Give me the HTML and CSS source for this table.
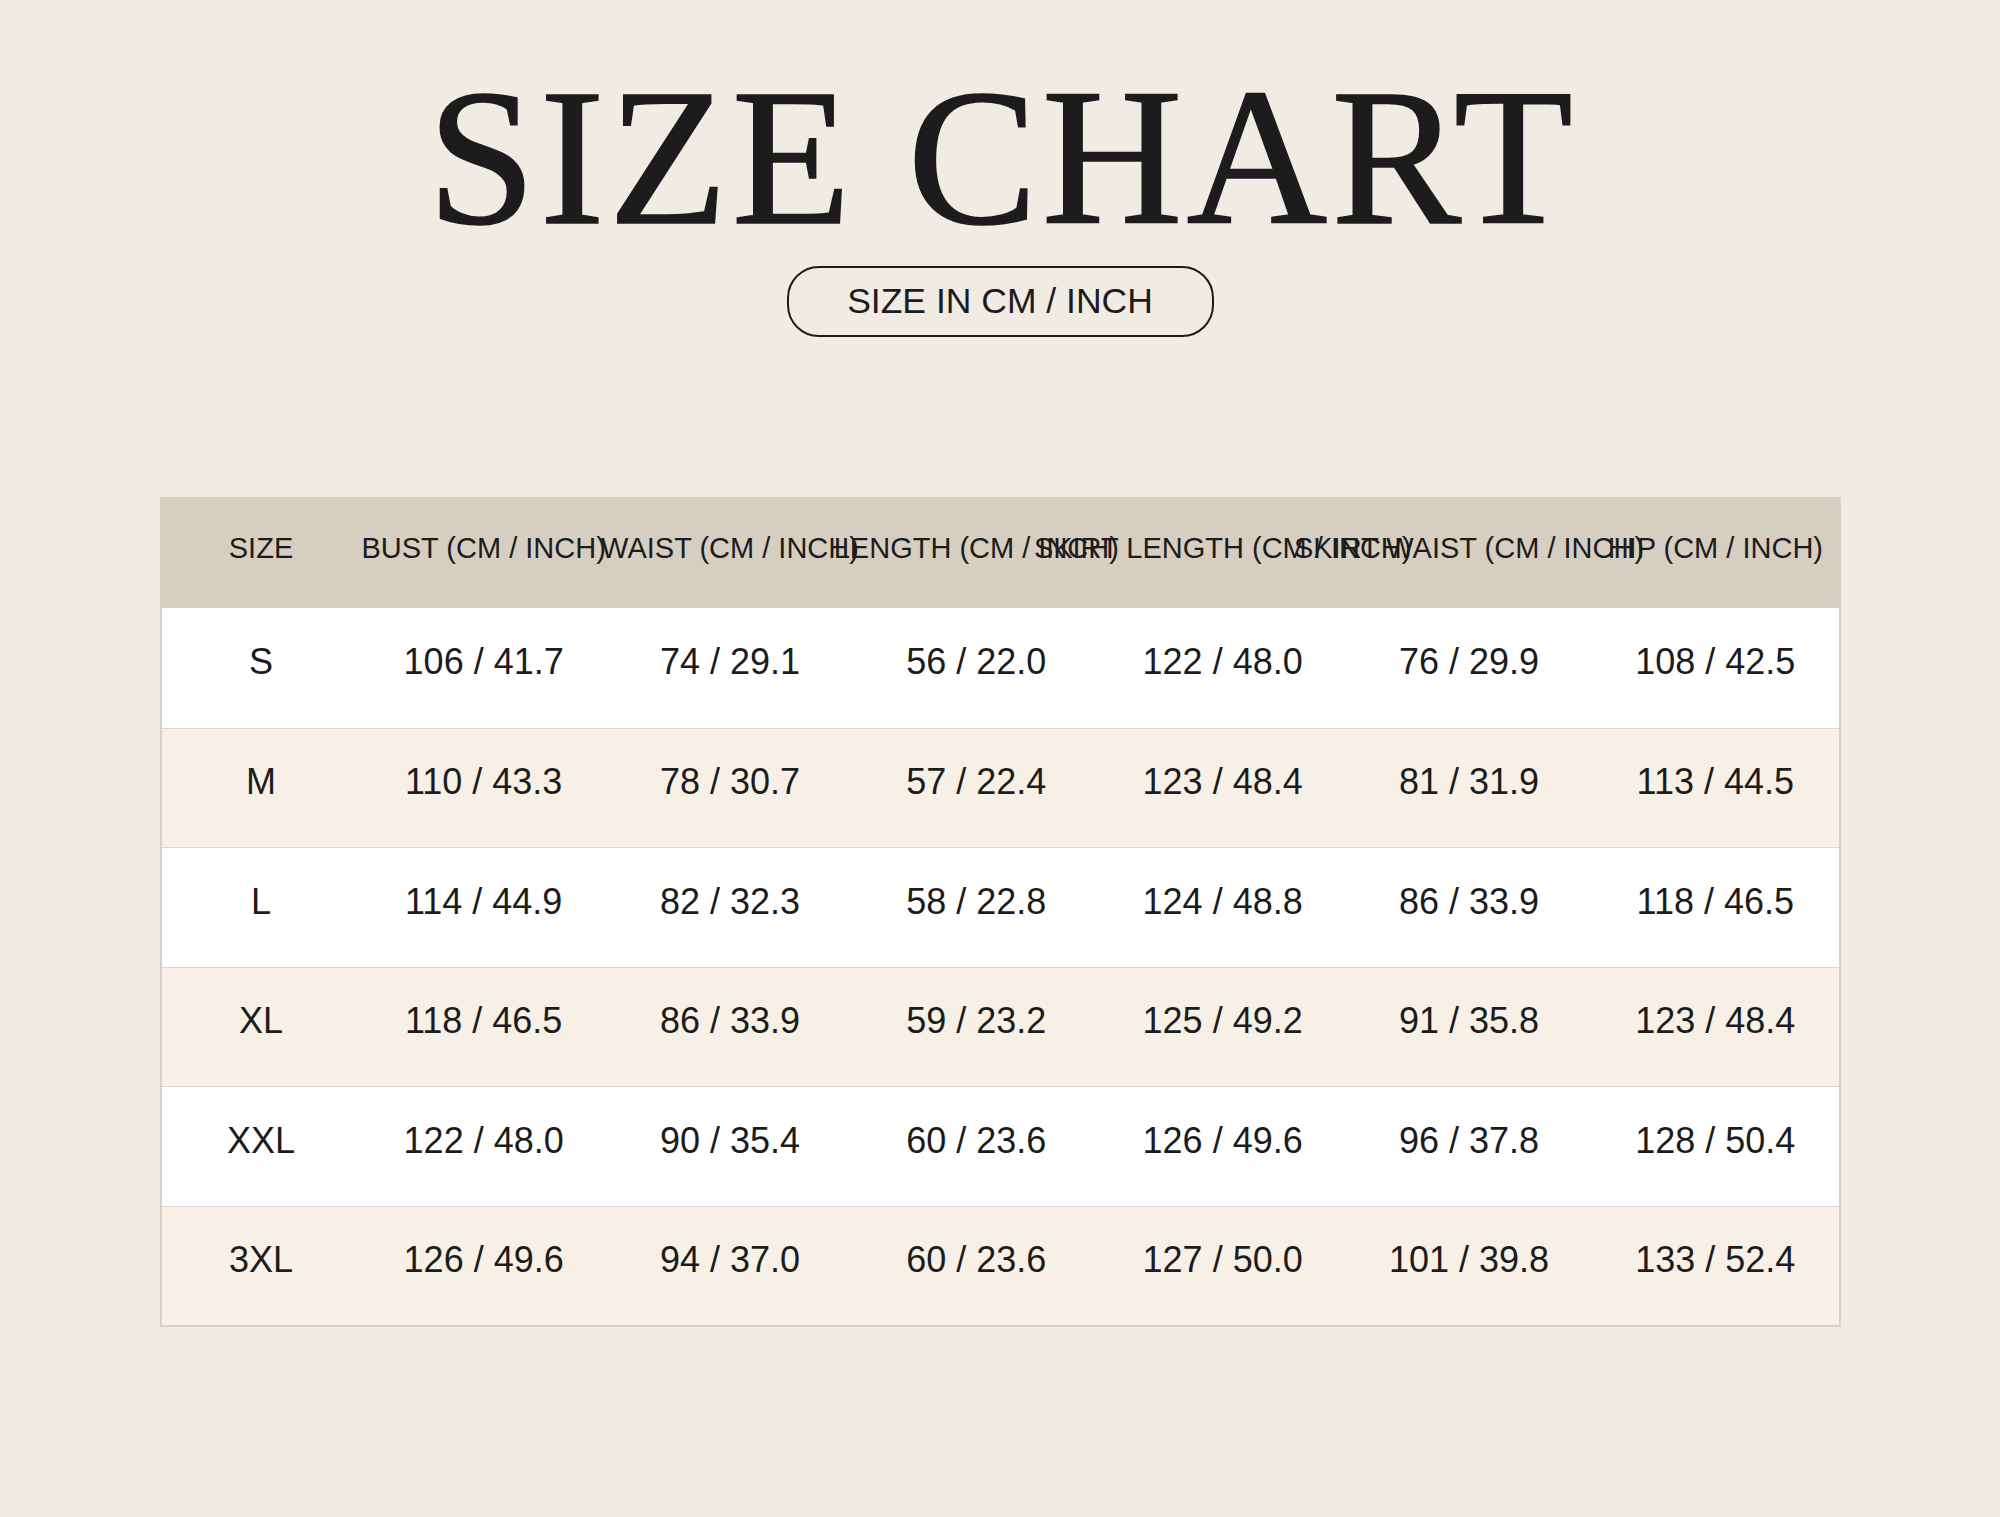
FILE: index.html
```html
<!DOCTYPE html>
<html lang="en">
<head>
<meta charset="utf-8">
<title>Size Chart</title>
<link rel="stylesheet" href="styles.css">
</head>
<body>
<main class="page">
  <h1 class="title">SIZE CHART</h1>
  <div class="unit-pill">SIZE IN CM / INCH</div>
  <div class="chart">
    <div class="row head">
      <div class="cell">SIZE</div>
      <div class="cell">BUST (CM / INCH)</div>
      <div class="cell">WAIST (CM / INCH)</div>
      <div class="cell">LENGTH (CM / INCH)</div>
      <div class="cell">SKIRT LENGTH (CM / INCH)</div>
      <div class="cell">SKIRT WAIST (CM / INCH)</div>
      <div class="cell">HIP (CM / INCH)</div>
    </div>
    <div class="row data">
      <div class="cell">S</div><div class="cell">106 / 41.7</div><div class="cell">74 / 29.1</div><div class="cell">56 / 22.0</div><div class="cell">122 / 48.0</div><div class="cell">76 / 29.9</div><div class="cell">108 / 42.5</div>
    </div>
    <div class="row data alt">
      <div class="cell">M</div><div class="cell">110 / 43.3</div><div class="cell">78 / 30.7</div><div class="cell">57 / 22.4</div><div class="cell">123 / 48.4</div><div class="cell">81 / 31.9</div><div class="cell">113 / 44.5</div>
    </div>
    <div class="row data">
      <div class="cell">L</div><div class="cell">114 / 44.9</div><div class="cell">82 / 32.3</div><div class="cell">58 / 22.8</div><div class="cell">124 / 48.8</div><div class="cell">86 / 33.9</div><div class="cell">118 / 46.5</div>
    </div>
    <div class="row data alt">
      <div class="cell">XL</div><div class="cell">118 / 46.5</div><div class="cell">86 / 33.9</div><div class="cell">59 / 23.2</div><div class="cell">125 / 49.2</div><div class="cell">91 / 35.8</div><div class="cell">123 / 48.4</div>
    </div>
    <div class="row data">
      <div class="cell">XXL</div><div class="cell">122 / 48.0</div><div class="cell">90 / 35.4</div><div class="cell">60 / 23.6</div><div class="cell">126 / 49.6</div><div class="cell">96 / 37.8</div><div class="cell">128 / 50.4</div>
    </div>
    <div class="row data alt">
      <div class="cell">3XL</div><div class="cell">126 / 49.6</div><div class="cell">94 / 37.0</div><div class="cell">60 / 23.6</div><div class="cell">127 / 50.0</div><div class="cell">101 / 39.8</div><div class="cell">133 / 52.4</div>
    </div>
  </div>
</main>
</body>
</html>
```
FILE: styles.css
```css
html, body {
  margin: 0;
  background: #f0ebe3;
}

body {
  font-family: "Liberation Sans", Arial, sans-serif;
  color: #1c1c1c;
}

.page {
  display: flex;
  flex-direction: column;
  align-items: center;
  padding-top: 60px;
  min-height: 1517px;
  box-sizing: border-box;
}

.title {
  margin: 0;
  font-family: "Liberation Serif", "Times New Roman", serif;
  font-weight: 400;
  font-size: 195px;
  line-height: 195px;
  letter-spacing: 4px;
  padding-left: 4px;
  color: #1c1c1c;
  -webkit-text-stroke: 1.5px #1c1c1c;
}

.unit-pill {
  margin-top: 11px;
  width: 427px;
  height: 71px;
  box-sizing: border-box;
  border: 2px solid #1c1c1c;
  border-radius: 32px;
  display: flex;
  align-items: center;
  justify-content: center;
  font-size: 35.5px;
}

.chart {
  margin-top: 160px;
  width: 1681px;
  box-sizing: border-box;
  border: 2px solid #d8d0c2;
}

.row {
  display: grid;
  grid-template-columns: 199px repeat(6, minmax(0, 1fr));
}

.head {
  height: 109px;
  background: #d6cec1;
}

.data {
  height: 119.5px;
  box-sizing: border-box;
  background: #ffffff;
  border-top: 1px solid #ddd6ca;
}

.head + .data {
  border-top: none;
}

.data.alt {
  background: #f7f0e6;
}

.cell {
  min-width: 0;
  display: flex;
  align-items: center;
  justify-content: center;
  white-space: nowrap;
  box-sizing: border-box;
  padding-bottom: 11px;
}

.head .cell {
  font-size: 29px;
}

.data .cell {
  font-size: 36px;
}
```
